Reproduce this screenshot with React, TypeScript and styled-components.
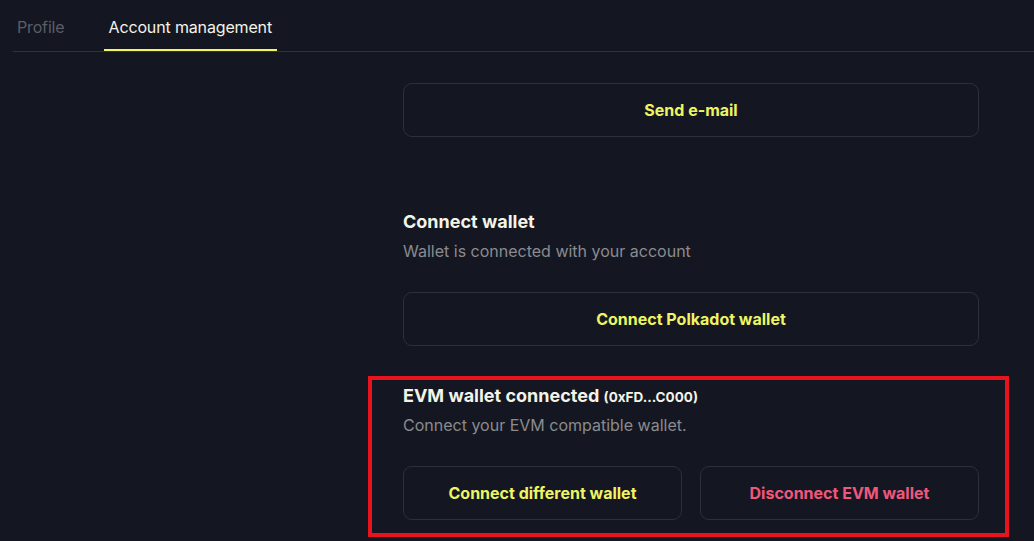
import styled, { createGlobalStyle } from "styled-components";

const GlobalStyle = createGlobalStyle`
  html, body {
    margin: 0;
    padding: 0;
    background: #141722;
  }
  body {
    font-family: Inter, "Noto Sans", sans-serif;
    -webkit-font-smoothing: antialiased;
  }
`;

const Page = styled.div({
  width: "1034px",
  height: "541px",
  overflow: "hidden",
  background: "#141722",
  color: "#f1f1e6",
});

const TabBar = styled.div({
  display: "flex",
  gap: "34px",
  marginLeft: "13px",
  borderBottom: "1px solid #2e3140",
});

const Tab = styled.div<{ $active?: boolean }>((p) => ({
  padding: "17px 5px 12px",
  fontSize: "16px",
  lineHeight: "20px",
  letterSpacing: "-0.15px",
  color: p.$active ? "#f3f3e6" : "#5c5d66",
  borderBottom: `2px solid ${p.$active ? "#f2f65c" : "transparent"}`,
  marginLeft: p.$active ? "0" : "-1px",
}));

const Layout = styled.div({
  display: "grid",
  gridTemplateColumns: "390px 576px",
  marginLeft: "13px",
  paddingTop: "31px",
});

const Column = styled.div({
  display: "flex",
  flexDirection: "column",
});

const Section = styled.section<{ $gap: number }>((p) => ({
  position: "relative",
  display: "flex",
  flexDirection: "column",
  marginTop: `${p.$gap}px`,
}));

const Highlight = styled.div({
  position: "absolute",
  left: "-35px",
  top: "-8px",
  right: "-30px",
  bottom: "-17px",
  border: "4.5px solid #e8131c",
  pointerEvents: "none",
});

const Title = styled.h3({
  margin: 0,
  height: "24px",
  fontSize: "18px",
  lineHeight: "24px",
  fontWeight: 700,
  color: "#f3f3e8",
});

const Address = styled.span({
  fontSize: "13.5px",
  lineHeight: "16px",
  fontWeight: 700,
});

const Subtitle = styled.p({
  margin: "6px 0 30px",
  fontSize: "16px",
  lineHeight: "22px",
  color: "#8b8b8e",
});

const ButtonRow = styled.div({
  display: "grid",
  gridTemplateColumns: "1fr 1fr",
  gap: "18px",
});

const Button = styled.button<{ $danger?: boolean }>((p) => ({
  height: "54px",
  width: "100%",
  boxSizing: "border-box",
  background: "transparent",
  border: "1px solid #2c2f3c",
  borderRadius: "9px",
  fontFamily: "Inter, sans-serif",
  fontSize: "16px",
  fontWeight: 700,
  color: p.$danger ? "#f0577d" : "#eff462",
  cursor: "pointer",
}));

export default function App() {
  return (
    <Page>
      <GlobalStyle />
      <TabBar>
        <Tab>Profile</Tab>
        <Tab $active>Account management</Tab>
      </TabBar>
      <Layout>
        <div />
        <Column>
          <Button>Send e-mail</Button>

          <Section $gap={73}>
            <Title>Connect wallet</Title>
            <Subtitle>Wallet is connected with your account</Subtitle>
            <Button>Connect Polkadot wallet</Button>
          </Section>

          <Section $gap={38}>
            <Highlight />
            <Title>
              EVM wallet connected <Address>(0xFD...C000)</Address>
            </Title>
            <Subtitle>Connect your EVM compatible wallet.</Subtitle>
            <ButtonRow>
              <Button>Connect different wallet</Button>
              <Button $danger>Disconnect EVM wallet</Button>
            </ButtonRow>
          </Section>
        </Column>
      </Layout>
    </Page>
  );
}
